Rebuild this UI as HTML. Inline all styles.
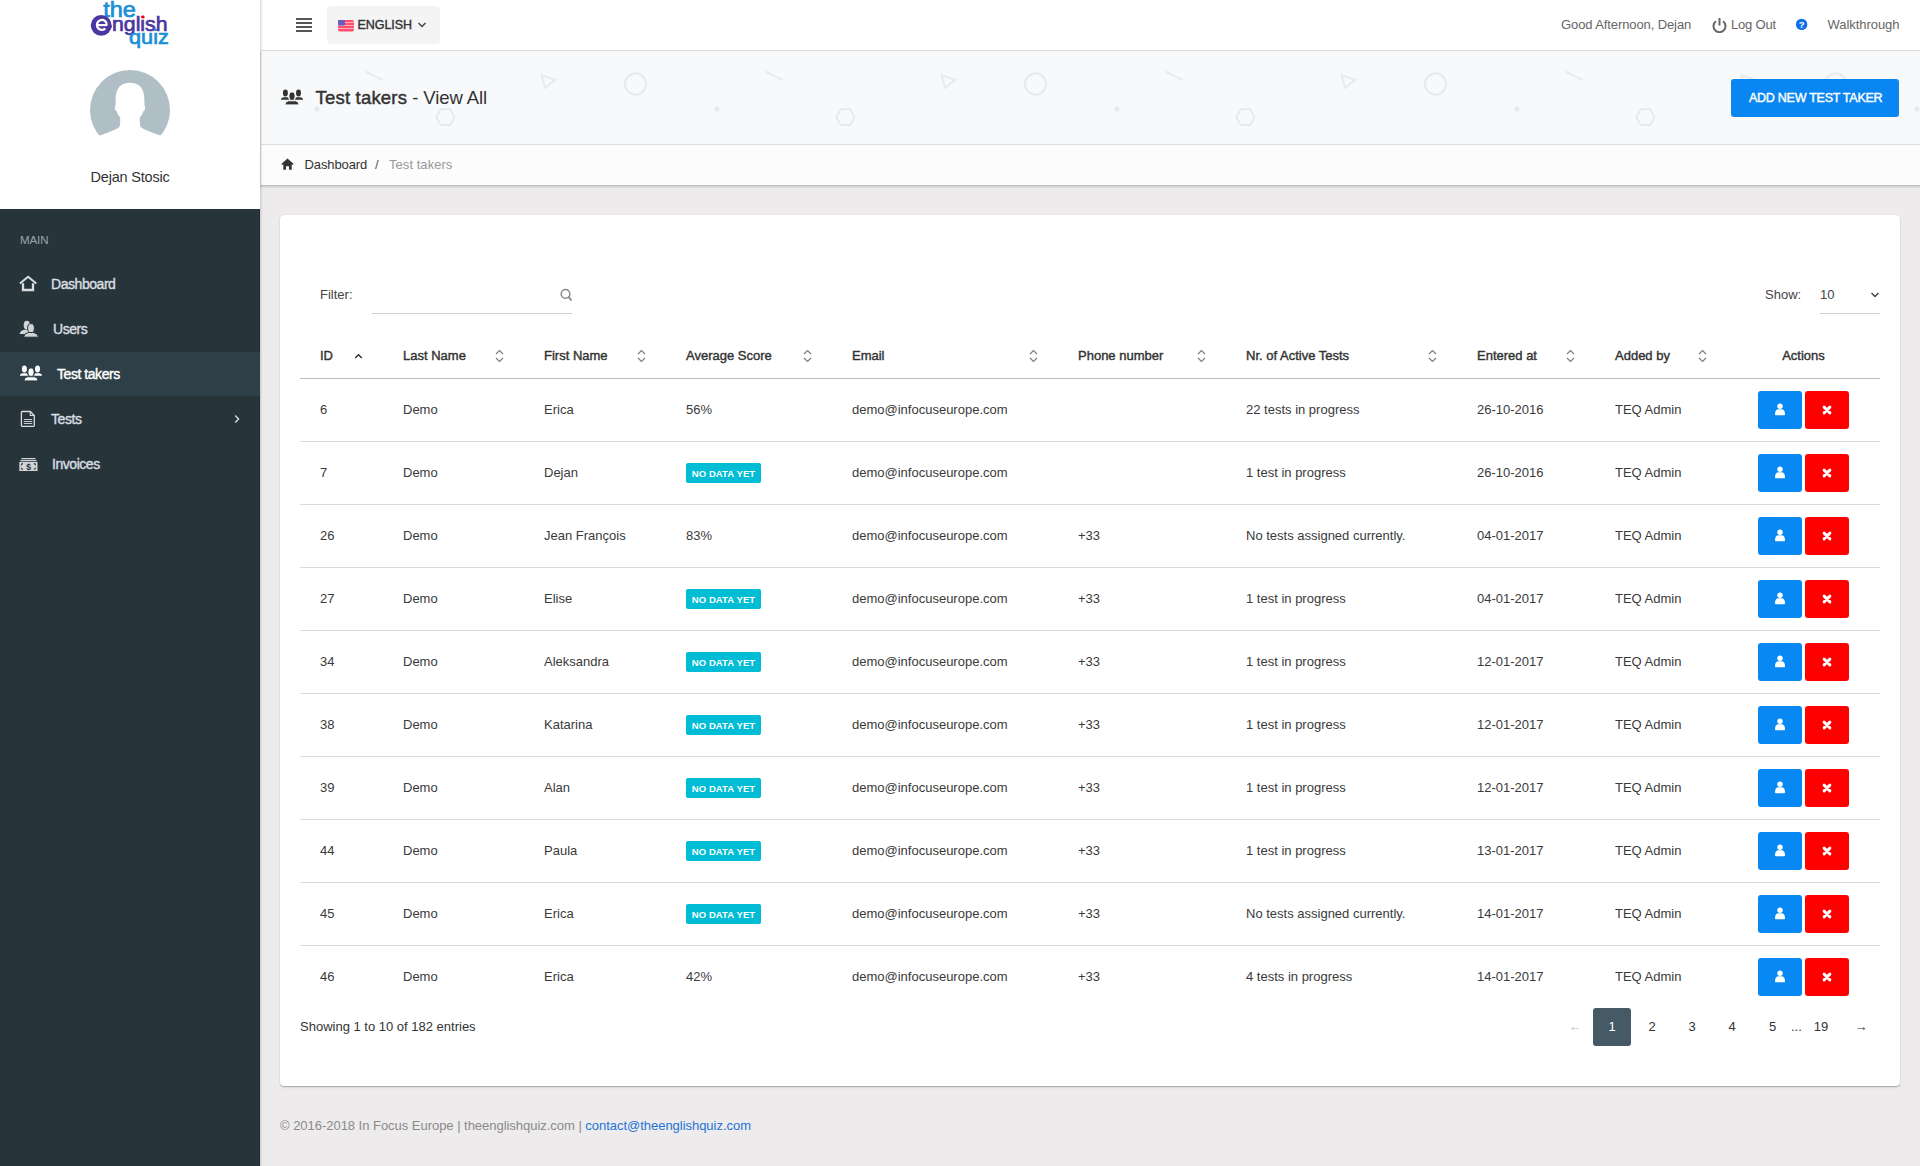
<!DOCTYPE html>
<html><head><meta charset="utf-8">
<style>
*{box-sizing:border-box;margin:0;padding:0}
html,body{width:1920px;height:1166px;overflow:hidden}
body{font-family:"Liberation Sans",sans-serif;background:#edebeb;color:#333;position:relative;font-size:13px}
.abs{position:absolute}
#side-top{left:0;top:0;width:260px;height:209px;background:#fff}
#side{left:0;top:209px;width:260px;height:957px;background:#27353b;border-right:1px solid #1f2b32}
#logo{left:85px;top:0}
#avatar{left:90px;top:70px;width:80px;height:80px;border-radius:50%;background:#b0bec5;overflow:hidden}
#uname{left:0;top:169px;width:260px;text-align:center;font-size:14.5px;color:#333;letter-spacing:-0.2px}
.menu-lbl{left:20px;top:234px;font-size:11.5px;color:#98a6ad;letter-spacing:-0.1px}
.mi{left:0;width:260px;height:44px;color:#d9dde0;font-size:14px;font-weight:400;-webkit-text-stroke-width:0.4px;letter-spacing:-0.45px}
.mi .t{position:absolute;top:16px;line-height:14px}
.mi svg{position:absolute}
#topbar{left:260px;top:0;width:1660px;height:51px;background:#fff;border-bottom:1px solid #dadada}
#phead{left:260px;top:51px;width:1660px;height:94px;background:#f8f9fa;border-bottom:1px solid #dedede;overflow:hidden}
#bc{left:260px;top:145px;width:1660px;height:40px;background:#fcfcfc;border-bottom:1px solid #fff}
#side-shadow{left:260px;top:0;width:3px;height:1166px;background:linear-gradient(to right,rgba(0,0,0,.13),rgba(0,0,0,0))}
#vl1{left:260px;top:0;width:1px;height:51px;background:#e2e2e2}
#vl2{left:260px;top:51px;width:1px;height:135px;background:#c5c5c5}
#bcs{left:260px;top:185px;width:1660px;height:3px;background:linear-gradient(to bottom,rgba(0,0,0,.24),rgba(0,0,0,.1) 50%,rgba(0,0,0,.04))}
#card{left:280px;top:215px;width:1620px;height:871px;background:#fff;border-radius:4px;box-shadow:0 1px 1px rgba(0,0,0,.24),0 0 1px rgba(0,0,0,.14),0 2px 3px rgba(0,0,0,.05)}
table{border-collapse:collapse;table-layout:fixed;position:absolute;left:20px;top:142px;width:1580px}
th{height:22px;text-align:left;font-weight:700;font-size:12.5px;color:#333;padding:0 0 18px 20px;position:relative;vertical-align:middle;letter-spacing:-0.15px;border-bottom:2px solid #c4c4c4;line-height:14px}
td{height:63px;padding:0 0 0 20px;font-size:13px;color:#3a3a3a;border-bottom:1px solid #dedede;vertical-align:middle;white-space:nowrap}
tr:last-child td{border-bottom:none}
.srt{position:absolute;right:20px;top:0px}
.badge{text-align:center;width:75px;background:#00bcd4;color:#fff;font-size:9.5px;font-weight:700;height:20px;line-height:21.5px;padding:0;border-radius:2px;letter-spacing:0.1px}
.btn{width:44px;height:38px;border-radius:3px}
.bb{background:#0888f2}
.br{background:#ff0000;margin-left:3px}
.tx{font-size:13px;line-height:1;color:#3a3a3a;white-space:nowrap}
.th{font-size:13px;line-height:1;font-weight:400;-webkit-text-stroke-width:0.4px;color:#333;white-space:nowrap}
.pg{position:absolute;top:793px;width:38px;height:38px;line-height:38px;text-align:center;font-size:13px;color:#333}
</style></head><body>
<div class="abs" id="side-top"></div>
<div class="abs" id="side"></div>
<svg class="abs" id="logo" style="left:85px;top:0" width="90" height="52" viewBox="0 0 90 52">
 <text x="18.2" y="17.3" font-family="Liberation Sans" font-size="22" fill="#1b8fd6" stroke="#1b8fd6" stroke-width="0.7" textLength="32.7" lengthAdjust="spacingAndGlyphs">the</text>
 <text x="27" y="30.5" font-family="Liberation Sans" font-size="20.5" fill="#4b35a0" stroke="#4b35a0" stroke-width="0.7" textLength="55.5" lengthAdjust="spacingAndGlyphs">nglish</text>
 <circle cx="58" cy="17" r="1.6" fill="#f00"/>
 <text x="44" y="44" font-family="Liberation Sans" font-size="20.5" fill="#1b8fd6" stroke="#1b8fd6" stroke-width="0.7" textLength="39.8" lengthAdjust="spacingAndGlyphs">quiz</text>
 <circle cx="16.2" cy="25.35" r="10.4" fill="#4b35a0"/>
 <path d="M21.9 25 A5 5 0 1 0 20.4 28.5" fill="none" stroke="#fff" stroke-width="2.3"/>
 <path d="M11.9 25.1 H22.6" stroke="#fff" stroke-width="2.1"/>
 <path d="M22.7 22.6 L27.2 26.5 L22.7 33.6 Z" fill="#4b35a0"/>
</svg>
<svg class="abs" style="left:90px;top:70px" width="80" height="80" viewBox="0 0 80 80">
 <circle cx="40" cy="40" r="40" fill="#b0bec5"/>
 <path fill="#fff" d="M0 80 L0 68 L9.8 65.5 Q24 60.5 28.8 57.5 Q30.2 56 30.2 52.5 L30.2 47.5 Q27.8 45.5 26.8 41.5 Q24.6 40.5 24.9 37 Q25.1 35.4 25.6 35 L25.6 30 C25.6 18 31 12.8 40 12.8 C49 12.8 54.4 18 54.4 30 L54.4 35 Q54.9 35.4 55.1 37 Q55.4 40.5 53.2 41.5 Q52.2 45.5 49.8 47.5 L49.8 52.5 Q49.8 56 51.2 57.5 Q56 60.5 70.2 65.5 L80 68 L80 80 Z"/>
</svg>
<div class="abs" id="uname">Dejan Stosic</div>
<div class="abs menu-lbl">MAIN</div>
<div class="abs" style="left:0;top:352px;width:260px;height:44px;background:#2f3f47"></div>
<div class="abs mi" style="top:261px">
 <svg style="left:19px;top:14px" width="19" height="18" viewBox="0 0 19 18"><path d="M0.9 8.6 L9.1 1.8 L17.3 8.6" fill="none" stroke="#d9dde0" stroke-width="2"/><path d="M4 8.3 V15 H14 V8.3" fill="none" stroke="#d9dde0" stroke-width="2.3"/></svg>
 <span class="t" style="left:51px">Dashboard</span>
</div>
<div class="abs mi" style="top:306px">
 <svg style="left:19px;top:14px" width="21" height="18" viewBox="0 0 21 18"><ellipse cx="7.8" cy="5.2" rx="3.1" ry="4.4" fill="#d0d4d6"/><path d="M0.6 14 Q1.5 10.3 5.5 9.8 L10 9.8 L10 14 Z" fill="#d0d4d6"/><ellipse cx="12" cy="8.2" rx="3.4" ry="4.6" fill="#d0d4d6" stroke="#263238" stroke-width="1"/><path d="M4.5 17.2 Q5.3 13 9.5 12.5 L14.5 12.5 Q18.7 13 19.6 17.2 Z" fill="#d0d4d6" stroke="#263238" stroke-width="1"/></svg>
 <span class="t" style="left:53px">Users</span>
</div>
<div class="abs mi" style="top:351px;color:#fff">
 <svg style="left:18.6px;top:13px" width="24" height="18" viewBox="0 0 24 18"><ellipse cx="5.4" cy="5" rx="2.5" ry="3.4" fill="#fff"/><path d="M0.9 11.7 Q1 9.6 3.5 9.2 L7.5 9.2 Q8.5 9.5 9 11.7 Z" fill="#fff"/><ellipse cx="18.5" cy="5" rx="2.5" ry="3.4" fill="#fff"/><path d="M15 11.7 Q15.5 9.5 16.5 9.2 H20.5 Q23 9.6 23.1 11.7 Z" fill="#fff"/><ellipse cx="12" cy="8.15" rx="3.1" ry="4.25" fill="#fff" stroke="#2f3f47" stroke-width="1"/><path d="M4.9 16.9 Q5 13.2 8.5 12.8 H15.5 Q19 13.2 19.1 16.9 Z" fill="#fff" stroke="#2f3f47" stroke-width="1"/></svg>
 <span class="t" style="left:57px">Test takers</span>
</div>
<div class="abs mi" style="top:396px">
 <svg style="left:20px;top:14px" width="16" height="18" viewBox="0 0 16 18"><path d="M2.2 1.5 H10.3 L14.3 5.5 V15.5 Q14.3 16.3 13.5 16.3 H2.2 Q1.4 16.3 1.4 15.5 V2.3 Q1.4 1.5 2.2 1.5 Z" fill="none" stroke="#d9dde0" stroke-width="1.3"/><path d="M10.3 1.5 V5.5 H14.3" fill="none" stroke="#d9dde0" stroke-width="1.1"/><path d="M3.8 9.5 H12.2 M3.8 11.5 H12.2 M3.8 13.5 H12.2" stroke="#d9dde0" stroke-width="0.9"/></svg>
 <span class="t" style="left:51px">Tests</span>
 <svg style="left:233px;top:18px" width="8" height="10" viewBox="0 0 8 10"><path d="M2.2 1.6 L5.6 5 L2.2 8.4" fill="none" stroke="#d9dde0" stroke-width="1.4"/></svg>
</div>
<div class="abs mi" style="top:441px">
 <svg style="left:19px;top:15px" width="19" height="16" viewBox="0 0 19 16"><path d="M2.4 2.6 H16.4 M1.4 4.6 H17.5" stroke="#d0d4d6" stroke-width="1.3"/><rect x="0.3" y="6" width="18.2" height="9" fill="#d0d4d6"/><path d="M2.3 9.2 Q2.3 7.6 3.9 7.6 M14.9 7.6 Q16.5 7.6 16.5 9.2 M2.3 11.8 Q2.3 13.4 3.9 13.4 M14.9 13.4 Q16.5 13.4 16.5 11.8" fill="none" stroke="#263238" stroke-width="1.1"/><text x="9.4" y="13.6" font-family="Liberation Sans" font-size="8.6" font-weight="700" fill="#263238" text-anchor="middle">$</text></svg>
 <span class="t" style="left:52px">Invoices</span>
</div>
<div class="abs" id="topbar"></div>
<div class="abs" style="left:296px;top:18px;width:16px;height:2px;background:#555"></div>
<div class="abs" style="left:296px;top:22px;width:16px;height:2px;background:#555"></div>
<div class="abs" style="left:296px;top:26px;width:16px;height:2px;background:#555"></div>
<div class="abs" style="left:296px;top:30px;width:16px;height:2px;background:#555"></div>
<div class="abs" style="left:327px;top:6px;width:113px;height:38px;background:#f4f4f4;border-radius:4px"></div>
<svg class="abs" style="left:338px;top:20px" width="16" height="12" viewBox="0 0 16 12"><rect width="16" height="11.5" rx="2" fill="#ff4d6d"/><path d="M0 2.5 H16 M0 5.5 H16 M0 8.5 H16" stroke="#ffb3c1" stroke-width="1"/><rect width="7" height="5.5" rx="1" fill="#6a5bbf"/></svg>
<div class="abs" style="left:357.5px;top:19px;font-size:12.5px;line-height:1;font-weight:400;-webkit-text-stroke-width:0.4px;color:#333;letter-spacing:-0.05px">ENGLISH</div>
<svg class="abs" style="left:417px;top:21px" width="10" height="8" viewBox="0 0 10 8"><path d="M1.5 2 L5 5.5 L8.5 2" fill="none" stroke="#444" stroke-width="1.5"/></svg>
<div class="abs" style="left:1561px;top:18px;font-size:13px;line-height:1;color:#666;letter-spacing:-0.1px">Good Afternoon, Dejan</div>
<svg class="abs" style="left:1711px;top:17px" width="17" height="16" viewBox="0 0 17 16"><path d="M5 4.3 A6 6 0 1 0 12 4.3" fill="none" stroke="#666" stroke-width="2"/><path d="M8.5 1 V8.5" stroke="#666" stroke-width="2"/></svg>
<div class="abs" style="left:1731px;top:18px;font-size:13px;line-height:1;color:#666;letter-spacing:-0.2px">Log Out</div>
<svg class="abs" style="left:1795px;top:18px" width="13" height="13" viewBox="0 0 13 13"><circle cx="6.6" cy="6.4" r="5.7" fill="#0f70e6"/><text x="6.6" y="10" font-family="Liberation Sans" font-size="9.5" font-weight="700" fill="#fff" text-anchor="middle">?</text></svg>
<div class="abs" style="left:1827.5px;top:18px;font-size:13px;line-height:1;color:#666;letter-spacing:-0.05px">Walkthrough</div>

<div class="abs" id="phead"><svg width="1660" height="93" style="position:absolute;left:0;top:0"><path d="M106.60000000000002 21 L122 28.900000000000006" stroke="#e9eaec" stroke-width="2" stroke-linecap="round"/><path d="M281.5 24.299999999999997 L295 28.799999999999997 L285 36.8 Z" fill="none" stroke="#e9eaec" stroke-width="2" stroke-linejoin="miter"/><circle cx="375.5" cy="33" r="10.6" fill="none" stroke="#e9eaec" stroke-width="2.2"/><circle cx="57" cy="57.7" r="2.7" fill="#e9eaec"/><path d="M176.2 66.2 L180.8 58.3 L190.0 58.3 L194.6 66.2 L190.0 74.1 L180.8 74.1 Z" fill="none" stroke="#e9eaec" stroke-width="2"/><path d="M506.6 21 L522 28.900000000000006" stroke="#e9eaec" stroke-width="2" stroke-linecap="round"/><path d="M681.5 24.299999999999997 L695 28.799999999999997 L685 36.8 Z" fill="none" stroke="#e9eaec" stroke-width="2" stroke-linejoin="miter"/><circle cx="775.5" cy="33" r="10.6" fill="none" stroke="#e9eaec" stroke-width="2.2"/><circle cx="457" cy="57.7" r="2.7" fill="#e9eaec"/><path d="M576.2 66.2 L580.8 58.3 L590.0 58.3 L594.6 66.2 L590.0 74.1 L580.8 74.1 Z" fill="none" stroke="#e9eaec" stroke-width="2"/><path d="M906.6 21 L922 28.900000000000006" stroke="#e9eaec" stroke-width="2" stroke-linecap="round"/><path d="M1081.5 24.299999999999997 L1095 28.799999999999997 L1085 36.8 Z" fill="none" stroke="#e9eaec" stroke-width="2" stroke-linejoin="miter"/><circle cx="1175.5" cy="33" r="10.6" fill="none" stroke="#e9eaec" stroke-width="2.2"/><circle cx="857" cy="57.7" r="2.7" fill="#e9eaec"/><path d="M976.2 66.2 L980.8 58.3 L990.0 58.3 L994.6 66.2 L990.0 74.1 L980.8 74.1 Z" fill="none" stroke="#e9eaec" stroke-width="2"/><path d="M1306.6 21 L1322 28.900000000000006" stroke="#e9eaec" stroke-width="2" stroke-linecap="round"/><path d="M1481.5 24.299999999999997 L1495 28.799999999999997 L1485 36.8 Z" fill="none" stroke="#e9eaec" stroke-width="2" stroke-linejoin="miter"/><circle cx="1575.5" cy="33" r="10.6" fill="none" stroke="#e9eaec" stroke-width="2.2"/><circle cx="1257" cy="57.7" r="2.7" fill="#e9eaec"/><path d="M1376.2 66.2 L1380.8 58.3 L1390.0 58.3 L1394.6 66.2 L1390.0 74.1 L1380.8 74.1 Z" fill="none" stroke="#e9eaec" stroke-width="2"/><path d="M1706.6 21 L1722 28.900000000000006" stroke="#e9eaec" stroke-width="2" stroke-linecap="round"/><path d="M1881.5 24.299999999999997 L1895 28.799999999999997 L1885 36.8 Z" fill="none" stroke="#e9eaec" stroke-width="2" stroke-linejoin="miter"/><circle cx="1975.5" cy="33" r="10.6" fill="none" stroke="#e9eaec" stroke-width="2.2"/><circle cx="1657" cy="57.7" r="2.7" fill="#e9eaec"/><path d="M1776.2 66.2 L1780.8 58.3 L1790.0 58.3 L1794.6 66.2 L1790.0 74.1 L1780.8 74.1 Z" fill="none" stroke="#e9eaec" stroke-width="2"/></svg></div>
<svg class="abs" style="left:280px;top:88px" width="24" height="18" viewBox="0 0 24 18"><ellipse cx="5.4" cy="5" rx="2.5" ry="3.4" fill="#333"/><path d="M0.9 11.7 Q1 9.6 3.5 9.2 L7.5 9.2 Q8.5 9.5 9 11.7 Z" fill="#333"/><ellipse cx="18.5" cy="5" rx="2.5" ry="3.4" fill="#333"/><path d="M15 11.7 Q15.5 9.5 16.5 9.2 H20.5 Q23 9.6 23.1 11.7 Z" fill="#333"/><ellipse cx="12" cy="8.15" rx="3.1" ry="4.25" fill="#333" stroke="#f8f9fa" stroke-width="1"/><path d="M4.9 16.9 Q5 13.2 8.5 12.8 H15.5 Q19 13.2 19.1 16.9 Z" fill="#333" stroke="#f8f9fa" stroke-width="1"/></svg>
<div class="abs" style="left:315.5px;top:89px;font-size:18.5px;line-height:1;color:#333;white-space:nowrap"><span style="-webkit-text-stroke-width:0.45px;letter-spacing:0.2px">Test takers</span><span style="letter-spacing:-0.1px"> - View All</span></div>
<div class="abs" style="left:1731px;top:79px;width:168px;height:38px;background:#0a86f2;border-radius:3px"></div>
<div class="abs" style="left:1749px;top:92px;font-size:12.5px;line-height:1;font-weight:400;-webkit-text-stroke-width:0.4px;color:#fff;letter-spacing:-0.26px;white-space:nowrap">ADD NEW TEST TAKER</div>

<div class="abs" id="bc"></div>
<svg class="abs" style="left:281px;top:158px" width="13" height="12" viewBox="0 0 13 12"><path d="M6.5 0.5 L0.3 6 L1.3 7 L2.3 6.2 V11.8 H5 V8.3 H8 V11.8 H10.7 V6.2 L11.7 7 L12.7 6 Z" fill="#333"/></svg>
<div class="abs" style="left:304.5px;top:158px;font-size:13px;line-height:1;color:#333;white-space:nowrap;letter-spacing:-0.1px">Dashboard</div>
<div class="abs" style="left:375px;top:158px;font-size:13px;line-height:1;color:#555">/</div>
<div class="abs" style="left:389px;top:158px;font-size:13px;line-height:1;color:#999;white-space:nowrap;letter-spacing:0.05px">Test takers</div>

<div class="abs" id="bcs"></div><div class="abs" id="side-shadow"></div><div class="abs" id="vl1"></div><div class="abs" id="vl2"></div>
<div class="abs" id="card"></div>







<!--CARD-->
<div class="abs tx" style="left:320px;top:288px;color:#444">Filter:</div>
<div class="abs" style="left:372px;top:313px;width:200px;height:1px;background:#d2d2d2"></div>
<svg class="abs" style="left:559px;top:288px" width="14" height="14" viewBox="0 0 14 14"><circle cx="6.5" cy="5.9" r="4.3" fill="none" stroke="#8a8a8a" stroke-width="1.5"/><path d="M9.6 9.2 L12.1 11.8" stroke="#8a8a8a" stroke-width="1.9" stroke-linecap="round"/></svg>
<div class="abs tx" style="left:1765px;top:288px;color:#444">Show:</div>
<div class="abs tx" style="left:1820px;top:288px;color:#444">10</div>
<svg class="abs" style="left:1870px;top:291px" width="10" height="8" viewBox="0 0 10 8"><path d="M1.5 2 L5 5.5 L8.5 2" fill="none" stroke="#444" stroke-width="1.5"/></svg>
<div class="abs" style="left:1820px;top:313px;width:60px;height:1px;background:#d2d2d2"></div>
<div class="abs th" style="left:320px;top:349px">ID</div>
<svg class="abs" style="left:354px;top:352px" width="9" height="8" viewBox="0 0 9 8"><path d="M1.2 6 L4.5 2.7 L7.8 6" fill="none" stroke="#333" stroke-width="1.5"/></svg>
<div class="abs th" style="left:403px;top:349px">Last Name</div>
<svg class="abs" style="left:494.5px;top:349px" width="9" height="14" viewBox="0 0 9 14"><path d="M1 5 L4.5 1.5 L8 5 M1 9 L4.5 12.5 L8 9" fill="none" stroke="#7d7d7d" stroke-width="1.15"/></svg>
<div class="abs th" style="left:544px;top:349px">First Name</div>
<svg class="abs" style="left:636.5px;top:349px" width="9" height="14" viewBox="0 0 9 14"><path d="M1 5 L4.5 1.5 L8 5 M1 9 L4.5 12.5 L8 9" fill="none" stroke="#7d7d7d" stroke-width="1.15"/></svg>
<div class="abs th" style="left:686px;top:349px">Average Score</div>
<svg class="abs" style="left:802.5px;top:349px" width="9" height="14" viewBox="0 0 9 14"><path d="M1 5 L4.5 1.5 L8 5 M1 9 L4.5 12.5 L8 9" fill="none" stroke="#7d7d7d" stroke-width="1.15"/></svg>
<div class="abs th" style="left:852px;top:349px">Email</div>
<svg class="abs" style="left:1028.5px;top:349px" width="9" height="14" viewBox="0 0 9 14"><path d="M1 5 L4.5 1.5 L8 5 M1 9 L4.5 12.5 L8 9" fill="none" stroke="#7d7d7d" stroke-width="1.15"/></svg>
<div class="abs th" style="left:1078px;top:349px">Phone number</div>
<svg class="abs" style="left:1196.5px;top:349px" width="9" height="14" viewBox="0 0 9 14"><path d="M1 5 L4.5 1.5 L8 5 M1 9 L4.5 12.5 L8 9" fill="none" stroke="#7d7d7d" stroke-width="1.15"/></svg>
<div class="abs th" style="left:1246px;top:349px">Nr. of Active Tests</div>
<svg class="abs" style="left:1427.5px;top:349px" width="9" height="14" viewBox="0 0 9 14"><path d="M1 5 L4.5 1.5 L8 5 M1 9 L4.5 12.5 L8 9" fill="none" stroke="#7d7d7d" stroke-width="1.15"/></svg>
<div class="abs th" style="left:1477px;top:349px">Entered at</div>
<svg class="abs" style="left:1565.5px;top:349px" width="9" height="14" viewBox="0 0 9 14"><path d="M1 5 L4.5 1.5 L8 5 M1 9 L4.5 12.5 L8 9" fill="none" stroke="#7d7d7d" stroke-width="1.15"/></svg>
<div class="abs th" style="left:1615px;top:349px">Added by</div>
<svg class="abs" style="left:1697.5px;top:349px" width="9" height="14" viewBox="0 0 9 14"><path d="M1 5 L4.5 1.5 L8 5 M1 9 L4.5 12.5 L8 9" fill="none" stroke="#7d7d7d" stroke-width="1.15"/></svg>
<div class="abs th" style="left:1727px;width:153px;text-align:center;top:349px">Actions</div>
<div class="abs" style="left:300px;top:378px;width:1580px;height:1px;background:#bbb"></div>
<div class="abs" style="left:300px;top:441px;width:1580px;height:1px;background:#dadada"></div>
<div class="abs tx" style="left:320px;top:403px">6</div>
<div class="abs tx" style="left:403px;top:403px">Demo</div>
<div class="abs tx" style="left:544px;top:403px">Erica</div>
<div class="abs tx" style="left:686px;top:403px">56%</div>
<div class="abs tx" style="left:852px;top:403px">demo@infocuseurope.com</div>
<div class="abs tx" style="left:1246px;top:403px">22 tests in progress</div>
<div class="abs tx" style="left:1477px;top:403px">26-10-2016</div>
<div class="abs tx" style="left:1615px;top:403px">TEQ Admin</div>
<div class="abs btn bb" style="left:1758px;top:391px"><svg style="position:absolute;left:16px;top:12px" width="12" height="13" viewBox="0 0 12 13"><circle cx="6" cy="3.3" r="2.7" fill="#fff"/><path d="M1 11.5 Q1 6.8 4 6.3 L8 6.3 Q11 6.8 11 11.5 Q11 12.3 10.2 12.3 H1.8 Q1 12.3 1 11.5 Z" fill="#fff"/></svg></div>
<div class="abs btn br" style="left:1805px;top:391px;margin:0"><svg style="position:absolute;left:17px;top:14px" width="10" height="10" viewBox="0 0 10 10"><path d="M2.1 2.1 L7.9 7.9 M7.9 2.1 L2.1 7.9" stroke="#fff" stroke-width="2.9" stroke-linecap="round"/></svg></div>
<div class="abs" style="left:300px;top:504px;width:1580px;height:1px;background:#dadada"></div>
<div class="abs tx" style="left:320px;top:466px">7</div>
<div class="abs tx" style="left:403px;top:466px">Demo</div>
<div class="abs tx" style="left:544px;top:466px">Dejan</div>
<div class="abs badge" style="left:686px;top:463px">NO DATA YET</div>
<div class="abs tx" style="left:852px;top:466px">demo@infocuseurope.com</div>
<div class="abs tx" style="left:1246px;top:466px">1 test in progress</div>
<div class="abs tx" style="left:1477px;top:466px">26-10-2016</div>
<div class="abs tx" style="left:1615px;top:466px">TEQ Admin</div>
<div class="abs btn bb" style="left:1758px;top:454px"><svg style="position:absolute;left:16px;top:12px" width="12" height="13" viewBox="0 0 12 13"><circle cx="6" cy="3.3" r="2.7" fill="#fff"/><path d="M1 11.5 Q1 6.8 4 6.3 L8 6.3 Q11 6.8 11 11.5 Q11 12.3 10.2 12.3 H1.8 Q1 12.3 1 11.5 Z" fill="#fff"/></svg></div>
<div class="abs btn br" style="left:1805px;top:454px;margin:0"><svg style="position:absolute;left:17px;top:14px" width="10" height="10" viewBox="0 0 10 10"><path d="M2.1 2.1 L7.9 7.9 M7.9 2.1 L2.1 7.9" stroke="#fff" stroke-width="2.9" stroke-linecap="round"/></svg></div>
<div class="abs" style="left:300px;top:567px;width:1580px;height:1px;background:#dadada"></div>
<div class="abs tx" style="left:320px;top:529px">26</div>
<div class="abs tx" style="left:403px;top:529px">Demo</div>
<div class="abs tx" style="left:544px;top:529px">Jean François</div>
<div class="abs tx" style="left:686px;top:529px">83%</div>
<div class="abs tx" style="left:852px;top:529px">demo@infocuseurope.com</div>
<div class="abs tx" style="left:1078px;top:529px">+33</div>
<div class="abs tx" style="left:1246px;top:529px">No tests assigned currently.</div>
<div class="abs tx" style="left:1477px;top:529px">04-01-2017</div>
<div class="abs tx" style="left:1615px;top:529px">TEQ Admin</div>
<div class="abs btn bb" style="left:1758px;top:517px"><svg style="position:absolute;left:16px;top:12px" width="12" height="13" viewBox="0 0 12 13"><circle cx="6" cy="3.3" r="2.7" fill="#fff"/><path d="M1 11.5 Q1 6.8 4 6.3 L8 6.3 Q11 6.8 11 11.5 Q11 12.3 10.2 12.3 H1.8 Q1 12.3 1 11.5 Z" fill="#fff"/></svg></div>
<div class="abs btn br" style="left:1805px;top:517px;margin:0"><svg style="position:absolute;left:17px;top:14px" width="10" height="10" viewBox="0 0 10 10"><path d="M2.1 2.1 L7.9 7.9 M7.9 2.1 L2.1 7.9" stroke="#fff" stroke-width="2.9" stroke-linecap="round"/></svg></div>
<div class="abs" style="left:300px;top:630px;width:1580px;height:1px;background:#dadada"></div>
<div class="abs tx" style="left:320px;top:592px">27</div>
<div class="abs tx" style="left:403px;top:592px">Demo</div>
<div class="abs tx" style="left:544px;top:592px">Elise</div>
<div class="abs badge" style="left:686px;top:589px">NO DATA YET</div>
<div class="abs tx" style="left:852px;top:592px">demo@infocuseurope.com</div>
<div class="abs tx" style="left:1078px;top:592px">+33</div>
<div class="abs tx" style="left:1246px;top:592px">1 test in progress</div>
<div class="abs tx" style="left:1477px;top:592px">04-01-2017</div>
<div class="abs tx" style="left:1615px;top:592px">TEQ Admin</div>
<div class="abs btn bb" style="left:1758px;top:580px"><svg style="position:absolute;left:16px;top:12px" width="12" height="13" viewBox="0 0 12 13"><circle cx="6" cy="3.3" r="2.7" fill="#fff"/><path d="M1 11.5 Q1 6.8 4 6.3 L8 6.3 Q11 6.8 11 11.5 Q11 12.3 10.2 12.3 H1.8 Q1 12.3 1 11.5 Z" fill="#fff"/></svg></div>
<div class="abs btn br" style="left:1805px;top:580px;margin:0"><svg style="position:absolute;left:17px;top:14px" width="10" height="10" viewBox="0 0 10 10"><path d="M2.1 2.1 L7.9 7.9 M7.9 2.1 L2.1 7.9" stroke="#fff" stroke-width="2.9" stroke-linecap="round"/></svg></div>
<div class="abs" style="left:300px;top:693px;width:1580px;height:1px;background:#dadada"></div>
<div class="abs tx" style="left:320px;top:655px">34</div>
<div class="abs tx" style="left:403px;top:655px">Demo</div>
<div class="abs tx" style="left:544px;top:655px">Aleksandra</div>
<div class="abs badge" style="left:686px;top:652px">NO DATA YET</div>
<div class="abs tx" style="left:852px;top:655px">demo@infocuseurope.com</div>
<div class="abs tx" style="left:1078px;top:655px">+33</div>
<div class="abs tx" style="left:1246px;top:655px">1 test in progress</div>
<div class="abs tx" style="left:1477px;top:655px">12-01-2017</div>
<div class="abs tx" style="left:1615px;top:655px">TEQ Admin</div>
<div class="abs btn bb" style="left:1758px;top:643px"><svg style="position:absolute;left:16px;top:12px" width="12" height="13" viewBox="0 0 12 13"><circle cx="6" cy="3.3" r="2.7" fill="#fff"/><path d="M1 11.5 Q1 6.8 4 6.3 L8 6.3 Q11 6.8 11 11.5 Q11 12.3 10.2 12.3 H1.8 Q1 12.3 1 11.5 Z" fill="#fff"/></svg></div>
<div class="abs btn br" style="left:1805px;top:643px;margin:0"><svg style="position:absolute;left:17px;top:14px" width="10" height="10" viewBox="0 0 10 10"><path d="M2.1 2.1 L7.9 7.9 M7.9 2.1 L2.1 7.9" stroke="#fff" stroke-width="2.9" stroke-linecap="round"/></svg></div>
<div class="abs" style="left:300px;top:756px;width:1580px;height:1px;background:#dadada"></div>
<div class="abs tx" style="left:320px;top:718px">38</div>
<div class="abs tx" style="left:403px;top:718px">Demo</div>
<div class="abs tx" style="left:544px;top:718px">Katarina</div>
<div class="abs badge" style="left:686px;top:715px">NO DATA YET</div>
<div class="abs tx" style="left:852px;top:718px">demo@infocuseurope.com</div>
<div class="abs tx" style="left:1078px;top:718px">+33</div>
<div class="abs tx" style="left:1246px;top:718px">1 test in progress</div>
<div class="abs tx" style="left:1477px;top:718px">12-01-2017</div>
<div class="abs tx" style="left:1615px;top:718px">TEQ Admin</div>
<div class="abs btn bb" style="left:1758px;top:706px"><svg style="position:absolute;left:16px;top:12px" width="12" height="13" viewBox="0 0 12 13"><circle cx="6" cy="3.3" r="2.7" fill="#fff"/><path d="M1 11.5 Q1 6.8 4 6.3 L8 6.3 Q11 6.8 11 11.5 Q11 12.3 10.2 12.3 H1.8 Q1 12.3 1 11.5 Z" fill="#fff"/></svg></div>
<div class="abs btn br" style="left:1805px;top:706px;margin:0"><svg style="position:absolute;left:17px;top:14px" width="10" height="10" viewBox="0 0 10 10"><path d="M2.1 2.1 L7.9 7.9 M7.9 2.1 L2.1 7.9" stroke="#fff" stroke-width="2.9" stroke-linecap="round"/></svg></div>
<div class="abs" style="left:300px;top:819px;width:1580px;height:1px;background:#dadada"></div>
<div class="abs tx" style="left:320px;top:781px">39</div>
<div class="abs tx" style="left:403px;top:781px">Demo</div>
<div class="abs tx" style="left:544px;top:781px">Alan</div>
<div class="abs badge" style="left:686px;top:778px">NO DATA YET</div>
<div class="abs tx" style="left:852px;top:781px">demo@infocuseurope.com</div>
<div class="abs tx" style="left:1078px;top:781px">+33</div>
<div class="abs tx" style="left:1246px;top:781px">1 test in progress</div>
<div class="abs tx" style="left:1477px;top:781px">12-01-2017</div>
<div class="abs tx" style="left:1615px;top:781px">TEQ Admin</div>
<div class="abs btn bb" style="left:1758px;top:769px"><svg style="position:absolute;left:16px;top:12px" width="12" height="13" viewBox="0 0 12 13"><circle cx="6" cy="3.3" r="2.7" fill="#fff"/><path d="M1 11.5 Q1 6.8 4 6.3 L8 6.3 Q11 6.8 11 11.5 Q11 12.3 10.2 12.3 H1.8 Q1 12.3 1 11.5 Z" fill="#fff"/></svg></div>
<div class="abs btn br" style="left:1805px;top:769px;margin:0"><svg style="position:absolute;left:17px;top:14px" width="10" height="10" viewBox="0 0 10 10"><path d="M2.1 2.1 L7.9 7.9 M7.9 2.1 L2.1 7.9" stroke="#fff" stroke-width="2.9" stroke-linecap="round"/></svg></div>
<div class="abs" style="left:300px;top:882px;width:1580px;height:1px;background:#dadada"></div>
<div class="abs tx" style="left:320px;top:844px">44</div>
<div class="abs tx" style="left:403px;top:844px">Demo</div>
<div class="abs tx" style="left:544px;top:844px">Paula</div>
<div class="abs badge" style="left:686px;top:841px">NO DATA YET</div>
<div class="abs tx" style="left:852px;top:844px">demo@infocuseurope.com</div>
<div class="abs tx" style="left:1078px;top:844px">+33</div>
<div class="abs tx" style="left:1246px;top:844px">1 test in progress</div>
<div class="abs tx" style="left:1477px;top:844px">13-01-2017</div>
<div class="abs tx" style="left:1615px;top:844px">TEQ Admin</div>
<div class="abs btn bb" style="left:1758px;top:832px"><svg style="position:absolute;left:16px;top:12px" width="12" height="13" viewBox="0 0 12 13"><circle cx="6" cy="3.3" r="2.7" fill="#fff"/><path d="M1 11.5 Q1 6.8 4 6.3 L8 6.3 Q11 6.8 11 11.5 Q11 12.3 10.2 12.3 H1.8 Q1 12.3 1 11.5 Z" fill="#fff"/></svg></div>
<div class="abs btn br" style="left:1805px;top:832px;margin:0"><svg style="position:absolute;left:17px;top:14px" width="10" height="10" viewBox="0 0 10 10"><path d="M2.1 2.1 L7.9 7.9 M7.9 2.1 L2.1 7.9" stroke="#fff" stroke-width="2.9" stroke-linecap="round"/></svg></div>
<div class="abs" style="left:300px;top:945px;width:1580px;height:1px;background:#dadada"></div>
<div class="abs tx" style="left:320px;top:907px">45</div>
<div class="abs tx" style="left:403px;top:907px">Demo</div>
<div class="abs tx" style="left:544px;top:907px">Erica</div>
<div class="abs badge" style="left:686px;top:904px">NO DATA YET</div>
<div class="abs tx" style="left:852px;top:907px">demo@infocuseurope.com</div>
<div class="abs tx" style="left:1078px;top:907px">+33</div>
<div class="abs tx" style="left:1246px;top:907px">No tests assigned currently.</div>
<div class="abs tx" style="left:1477px;top:907px">14-01-2017</div>
<div class="abs tx" style="left:1615px;top:907px">TEQ Admin</div>
<div class="abs btn bb" style="left:1758px;top:895px"><svg style="position:absolute;left:16px;top:12px" width="12" height="13" viewBox="0 0 12 13"><circle cx="6" cy="3.3" r="2.7" fill="#fff"/><path d="M1 11.5 Q1 6.8 4 6.3 L8 6.3 Q11 6.8 11 11.5 Q11 12.3 10.2 12.3 H1.8 Q1 12.3 1 11.5 Z" fill="#fff"/></svg></div>
<div class="abs btn br" style="left:1805px;top:895px;margin:0"><svg style="position:absolute;left:17px;top:14px" width="10" height="10" viewBox="0 0 10 10"><path d="M2.1 2.1 L7.9 7.9 M7.9 2.1 L2.1 7.9" stroke="#fff" stroke-width="2.9" stroke-linecap="round"/></svg></div>
<div class="abs tx" style="left:320px;top:970px">46</div>
<div class="abs tx" style="left:403px;top:970px">Demo</div>
<div class="abs tx" style="left:544px;top:970px">Erica</div>
<div class="abs tx" style="left:686px;top:970px">42%</div>
<div class="abs tx" style="left:852px;top:970px">demo@infocuseurope.com</div>
<div class="abs tx" style="left:1078px;top:970px">+33</div>
<div class="abs tx" style="left:1246px;top:970px">4 tests in progress</div>
<div class="abs tx" style="left:1477px;top:970px">14-01-2017</div>
<div class="abs tx" style="left:1615px;top:970px">TEQ Admin</div>
<div class="abs btn bb" style="left:1758px;top:958px"><svg style="position:absolute;left:16px;top:12px" width="12" height="13" viewBox="0 0 12 13"><circle cx="6" cy="3.3" r="2.7" fill="#fff"/><path d="M1 11.5 Q1 6.8 4 6.3 L8 6.3 Q11 6.8 11 11.5 Q11 12.3 10.2 12.3 H1.8 Q1 12.3 1 11.5 Z" fill="#fff"/></svg></div>
<div class="abs btn br" style="left:1805px;top:958px;margin:0"><svg style="position:absolute;left:17px;top:14px" width="10" height="10" viewBox="0 0 10 10"><path d="M2.1 2.1 L7.9 7.9 M7.9 2.1 L2.1 7.9" stroke="#fff" stroke-width="2.9" stroke-linecap="round"/></svg></div>
<div class="abs tx" style="left:300px;top:1020px;color:#333">Showing 1 to 10 of 182 entries</div>
<div class="abs" style="left:1593px;top:1008px;width:38px;height:38px;background:#455a64;border-radius:3px"></div>
<div class="abs tx" style="left:1582px;width:60px;text-align:center;top:1020px;color:#fff">1</div>
<div class="abs tx" style="left:1622px;width:60px;text-align:center;top:1020px;color:#333">2</div>
<div class="abs tx" style="left:1662px;width:60px;text-align:center;top:1020px;color:#333">3</div>
<div class="abs tx" style="left:1702px;width:60px;text-align:center;top:1020px;color:#333">4</div>
<div class="abs tx" style="left:1742.5px;width:60px;text-align:center;top:1020px;color:#333">5</div>
<div class="abs tx" style="left:1791px;width:60px;text-align:center;top:1020px;color:#333">19</div>
<div class="abs tx" style="left:1791px;top:1020px;color:#333">...</div>
<div class="abs tx" style="left:1545px;width:60px;text-align:center;top:1020px;color:#bbb">&larr;</div>
<div class="abs tx" style="left:1831px;width:60px;text-align:center;top:1020px;color:#333">&rarr;</div>
<div class="abs tx" style="left:280px;top:1119px;color:#8a8a8a;white-space:nowrap;letter-spacing:-0.03px">&copy; 2016-2018 In Focus Europe | theenglishquiz.com | <span style="color:#1f73d9">contact@theenglishquiz.com</span></div>
<!--/CARD-->
</body></html>
